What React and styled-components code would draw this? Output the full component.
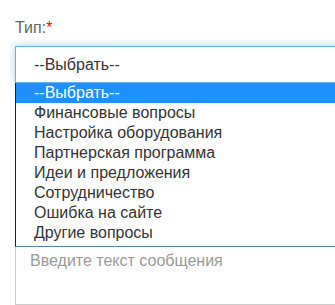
import React from 'react'

import styled, { createGlobalStyle } from 'styled-components';

const options = [
  '--Выбрать--',
  'Финансовые вопросы',
  'Настройка оборудования',
  'Партнерская программа',
  'Идеи и предложения',
  'Сотрудничество',
  'Ошибка на сайте',
  'Другие вопросы',
];

const GlobalStyle = createGlobalStyle`
  html, body {
    margin: 0;
    padding: 0;
    background: #fff;
    overflow: hidden;
  }
  body {
    font-family: "Liberation Sans", Arial, sans-serif;
  }
`;

export default function App() {
  return (
    <>
      <GlobalStyle />
      <StyledForm>
        <Label>
          Тип:<Required>*</Required>
        </Label>
        <SelectBox>--Выбрать--</SelectBox>
        <Listbox>
          {options.map((option, i) => (
            <Option key={option} selected={i === 0}>{option}</Option>
          ))}
        </Listbox>
        <Message placeholder="Введите текст сообщения" />
      </StyledForm>
    </>
  )
}

const StyledForm = styled.div`
  display: flex;
  flex-direction: column;
  padding: 19px 0 0 15px;
  width: 420px;
  height: 286px;
  overflow: hidden;
`;

const Label = styled.label`
  font-size: 16px;
  line-height: 18px;
  color: #666;
  margin-bottom: 9px;
`;

const Required = styled.span`
  color: #f00;
`;

const SelectBox = styled.div`
  box-sizing: border-box;
  height: 37px;
  border: 1px solid #66afe9;
  box-shadow: 0 0 8px rgba(102, 175, 233, 0.6);
  padding: 0 18px;
  display: flex;
  align-items: center;
  font-size: 16px;
  color: #333;
  background: #fff;
`;

const Listbox = styled.ul`
  position: relative;
  z-index: 1;
  list-style: none;
  margin: 0;
  padding: 0 0 3px;
  background: #fff;
  border-left: 1px solid #1c1c2c;
  border-bottom: 1px solid #5b7fb8;
`;

const Option = styled.li`
  height: 20px;
  line-height: 20px;
  padding-left: 18px;
  font-size: 16px;
  color: ${p => (p.selected ? '#fff' : '#333')};
  background: ${p => (p.selected ? '#1e90ff' : 'transparent')};
`;

const Message = styled.textarea`
  box-sizing: border-box;
  flex: 1;
  margin-top: -1px;
  border: 1px solid #ccc;
  padding: 5px 14px;
  font-family: "Liberation Sans", Arial, sans-serif;
  font-size: 16px;
  resize: none;
  outline: none;

  &::placeholder {
    color: #999;
  }
`;
